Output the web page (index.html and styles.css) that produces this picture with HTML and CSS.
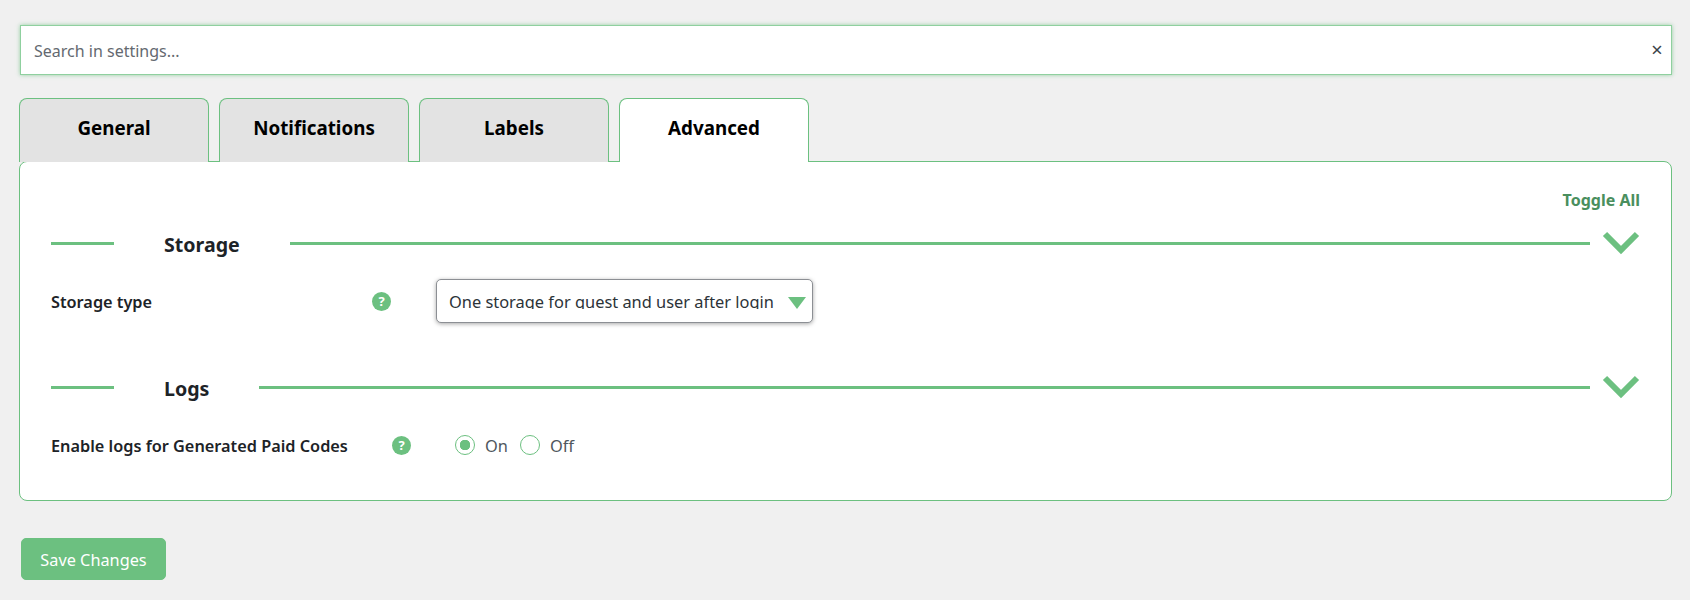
FILE: index.html
```html
<!DOCTYPE html>
<html lang="en">
<head>
    <meta charset="UTF-8">
    <meta name="viewport" content="width=device-width, initial-scale=1.0">
    <title>Settings</title>
    <link rel="stylesheet" href="styles.css">
</head>
<body>

<div class="search-box">
    <input type="text" class="search-input" placeholder="Search in settings...">
    <button class="search-clear" type="button">×</button>
</div>

<div class="tabs">
    <a class="tab">General</a>
    <a class="tab">Notifications</a>
    <a class="tab">Labels</a>
    <a class="tab tab-active">Advanced</a>
</div>

<div class="panel">
    <div class="toggle-all">Toggle All</div>

    <div class="section">
        <div class="section-head">
            <span class="line line-short"></span>
            <h2 class="section-title">Storage</h2>
            <span class="line"></span>
            <svg class="chevron" width="38" height="24" viewBox="0 0 38 24"><path d="M3 3 L19 19 L35 3" fill="none" stroke="#6cc080" stroke-width="6"/></svg>
        </div>
        <div class="row row-storage">
            <label class="row-label">Storage type</label>
            <span class="help">?</span>
            <div class="select-box">
                <span class="select-text">One storage for guest and user after login</span>
                <span class="select-arrow"></span>
            </div>
        </div>
    </div>

    <div class="section">
        <div class="section-head">
            <span class="line line-short"></span>
            <h2 class="section-title">Logs</h2>
            <span class="line"></span>
            <svg class="chevron" width="38" height="24" viewBox="0 0 38 24"><path d="M3 3 L19 19 L35 3" fill="none" stroke="#6cc080" stroke-width="6"/></svg>
        </div>
        <div class="row row-logs">
            <label class="row-label">Enable logs for Generated Paid Codes</label>
            <span class="help">?</span>
            <div class="radios">
                <label class="radio"><input type="radio" name="logs" checked> On</label>
                <label class="radio"><input type="radio" name="logs"> Off</label>
            </div>
        </div>
    </div>
</div>

<button class="save-button" type="button">Save Changes</button>

</body>
</html>
```

FILE: styles.css
```css
body {
    font-family: "Noto Sans", Arial, sans-serif;
    margin: 0;
    padding: 25px 18px 0 19px;
    height: 600px;
    box-sizing: border-box;
    overflow: hidden;
    background-color: #f0f0f0;
    color: #1d2327;
    font-size: 16px;
}
.search-box {
    display: flex;
    align-items: center;
    height: 50px;
    margin-left: 1px;
    box-sizing: border-box;
    background: #fff;
    border: 1px solid #8fd09f;
    box-shadow: 0 0 4px rgba(108, 192, 128, 0.7);
}
.search-input {
    flex: 1;
    height: 100%;
    box-sizing: border-box;
    padding: 2px 13px 0;
    border: none;
    outline: none;
    background: transparent;
    font-family: inherit;
    font-size: 16px;
    color: #1d2327;
}
.search-input::placeholder {
    color: #646970;
    opacity: 1;
}
.search-clear {
    width: 20px;
    margin-right: 4px;
    padding: 0;
    border: none;
    background: none;
    font-family: inherit;
    font-size: 20px;
    line-height: 20px;
    color: #3c434a;
}
.tabs {
    display: flex;
    gap: 10px;
    margin-top: 23px;
}
.tab {
    width: 190px;
    height: 64px;
    box-sizing: border-box;
    padding-top: 16px;
    text-align: center;
    font-size: 18.8px;
    font-weight: 700;
    line-height: 26px;
    color: #000;
    background: #e3e3e3;
    border: 1px solid #6cc080;
    border-bottom: none;
    border-radius: 8px 8px 0 0;
}
.tab-active {
    position: relative;
    z-index: 1;
    background: #fff;
}
.panel {
    height: 340px;
    margin-top: -1px;
    box-sizing: border-box;
    padding: 28px 31px 0 31px;
    background: #fff;
    border: 1px solid #6cc080;
    border-radius: 8px;
}
.toggle-all {
    margin-bottom: 16px;
    text-align: right;
    font-size: 16px;
    font-weight: 700;
    line-height: 20px;
    color: #4a8f5e;
}
.section-head {
    display: flex;
    align-items: center;
    height: 34px;
}
.line {
    flex: 1;
    height: 3px;
    background: #6cc080;
}
.line-short {
    flex: none;
    width: 63px;
}
.section-title {
    margin: 0;
    padding: 3px 50px 0;
    font-size: 19.6px;
    font-weight: 700;
    line-height: 31px;
}
.chevron {
    margin-left: 12px;
}
.section {
    margin-bottom: 47px;
}
.row {
    display: flex;
    align-items: center;
    margin-top: 19px;
    height: 44px;
}
.row-label {
    box-sizing: border-box;
    padding-top: 2px;
    font-size: 16.3px;
    font-weight: 600;
}
.row-storage .row-label {
    width: 321px;
}
.row-logs .row-label {
    width: 341px;
}
.help {
    width: 19px;
    height: 19px;
    border-radius: 50%;
    background: #6cc080;
    color: #fff;
    font-size: 13px;
    font-weight: 700;
    line-height: 19px;
    text-align: center;
}
.select-box {
    display: flex;
    align-items: center;
    width: 377px;
    height: 44px;
    margin-left: 45px;
    box-sizing: border-box;
    padding: 0 6px 0 12px;
    background: #fff;
    border: 1px solid #8c8f94;
    border-radius: 5px;
    box-shadow: 0 1px 4px rgba(0, 0, 0, 0.35);
}
.select-text {
    flex: 1;
    height: 16px;
    overflow: hidden;
    font-size: 16.4px;
    line-height: 18px;
    white-space: nowrap;
    color: #2c3338;
}
.select-arrow {
    width: 0;
    height: 0;
    margin-top: 3px;
    border-left: 9px solid transparent;
    border-right: 9px solid transparent;
    border-top: 12px solid #6cc080;
}
.radios {
    display: flex;
    gap: 12px;
    margin-left: 44px;
}
.radio {
    display: flex;
    align-items: center;
    gap: 10px;
    font-size: 16.4px;
    color: #50575e;
}
.radio input {
    appearance: none;
    width: 20px;
    height: 20px;
    margin: 0;
    border: 1px solid #6cc080;
    border-radius: 50%;
    background: #fff;
}
.radio input:checked {
    background: radial-gradient(circle, #6cc080 0, #6cc080 5px, #fff 5.5px);
}
.save-button {
    display: block;
    width: 145px;
    height: 42px;
    margin: 37px 0 0 2px;
    padding: 2px 0 0;
    border: 1px solid #6cc080;
    border-radius: 5px;
    background: #6cc080;
    color: #fff;
    font-family: inherit;
    font-size: 16.3px;
}
```
